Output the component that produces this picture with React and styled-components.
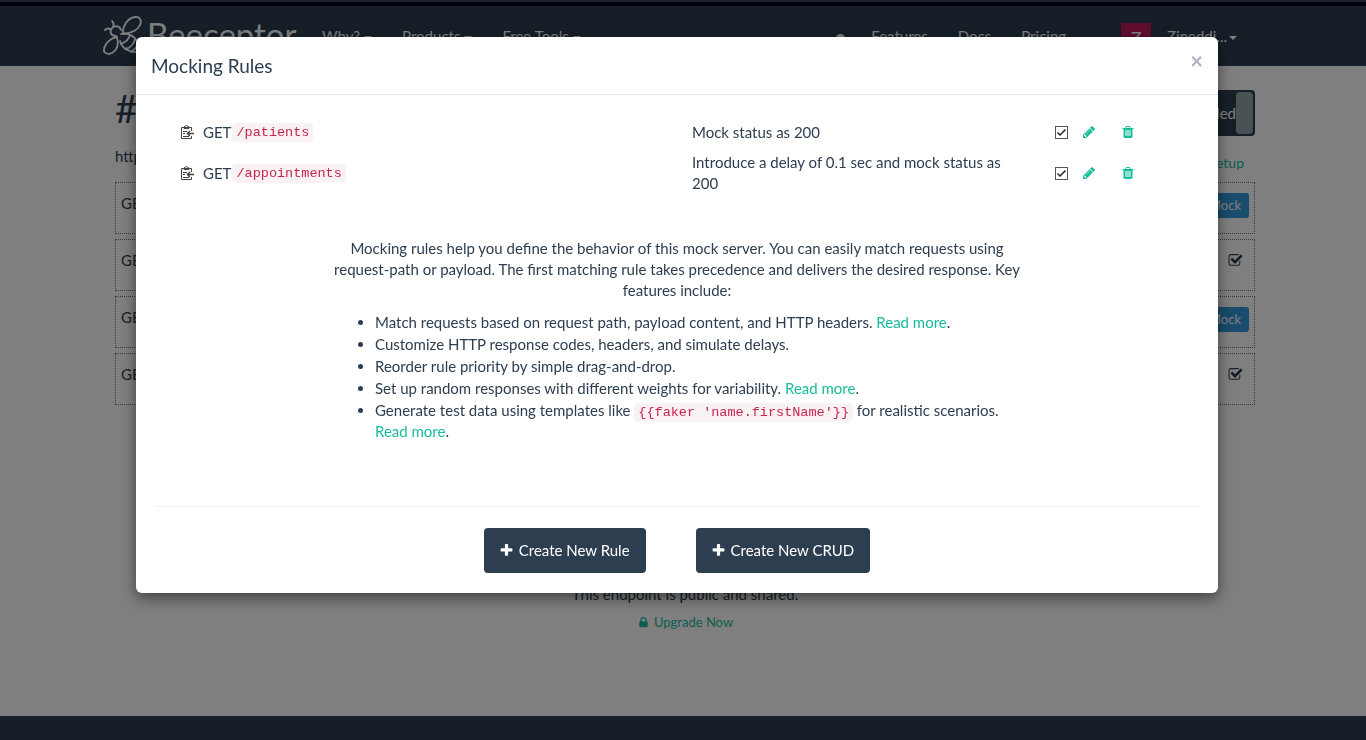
import React from 'react';
import styled, { createGlobalStyle } from 'styled-components';

const navy = '#2c3e50';
const green = '#18bc9c';

const GlobalStyle = createGlobalStyle`
  *, *::before, *::after { box-sizing: border-box; }
  body {
    margin: 0;
    font-family: Lato, "Liberation Sans", sans-serif;
    font-size: 15px;
    line-height: 21px;
    color: ${navy};
    background: #fff;
    overflow: hidden;
  }
  button, input { font: inherit; }
  p, h1, h2, ul { margin: 0; font-weight: 400; }
`;

const iconPaths = {
  pencil: 'M491 1536l91-91-235-235-91 91v107h128v128h107zm523-928q0-22-22-22-10 0-17 7l-542 542q-7 7-7 17 0 22 22 22 10 0 17-7l542-542q7-7 7-17zm-54-192l416 416-832 832h-416v-416zm683 96q0 53-37 90l-166 166-416-416 166-165q36-38 90-38 53 0 91 38l235 234q37 39 37 91z',
  trash: 'M704 1376v-704q0-14-9-23t-23-9h-64q-14 0-23 9t-9 23v704q0 14 9 23t23 9h64q14 0 23-9t9-23zm256 0v-704q0-14-9-23t-23-9h-64q-14 0-23 9t-9 23v704q0 14 9 23t23 9h64q14 0 23-9t9-23zm256 0v-704q0-14-9-23t-23-9h-64q-14 0-23 9t-9 23v704q0 14 9 23t23 9h64q14 0 23-9t9-23zm-544-992h448l-48-117q-7-9-17-11h-317q-10 2-17 11zm928 32v64q0 14-9 23t-23 9h-96v948q0 83-47 143.500t-113 60.500h-832q-66 0-113-58.500t-47-141.500v-952h-96q-14 0-23-9t-9-23v-64q0-14 9-23t23-9h309l70-167q15-37 54-63t79-26h320q40 0 79 26t54 63l70 167h309q14 0 23 9t9 23z',
  lock: 'M640 768h512v-192q0-106-75-181t-181-75-181 75-75 181v192zm832 96v576q0 40-28 68t-68 28h-960q-40 0-68-28t-28-68v-576q0-40 28-68t68-28h32v-192q0-184 132-316t316-132 316 132 132 316v192h32q40 0 68 28t28 68z',
  plus: 'M1600 736v192q0 40-28 68t-68 28h-416v416q0 40-28 68t-68 28h-192q-40 0-68-28t-28-68v-416h-416q-40 0-68-28t-28-68v-192q0-40 28-68t68-28h416v-416q0-40 28-68t68-28h192q40 0 68 28t28 68v416h416q40 0 68 28t28 68z',
  checkSquare: 'M1472 930v318q0 119-84.500 203.500t-203.500 84.500h-832q-119 0-203.500-84.500t-84.500-203.500v-832q0-119 84.500-203.500t203.500-84.500h832q63 0 117 25 15 7 18 23 3 17-9 29l-49 49q-10 10-23 10-3 0-9-2-23-6-45-6h-832q-66 0-113 47t-47 113v832q0 66 47 113t113 47h832q66 0 113-47t47-113v-254q0-13 9-22l64-64q10-10 23-10 6 0 12 3 20 8 20 29zm231-489l-814 814q-24 24-57 24t-57-24l-430-430q-24-24-24-57t24-57l110-110q24-24 57-24t57 24l263 263 647-647q24-24 57-24t57 24l110 110q24 24 24 57t-24 57z',
};

const IconSvg = styled.svg`
  width: ${(p) => p.$size || 15}px;
  height: ${(p) => p.$size || 15}px;
  fill: currentColor;
  flex: none;
`;

const Icon = ({ name, size }) => (
  <IconSvg viewBox="0 0 1792 1792" $size={size} aria-hidden="true">
    <path d={iconPaths[name]} />
  </IconSvg>
);

/* ---------- page behind the dialog ---------- */

const Page = styled.div`
  min-height: 100vh;
  display: flex;
  flex-direction: column;
`;

const TopStrip = styled.div`
  height: 6px;
  background: #020424;
  border-top: 2px solid #3c4262;
`;

const Container = styled.div`
  width: calc(100% - 30px);
  max-width: 1140px;
  margin: 0 auto;
`;

const Header = styled.header`
  background: ${navy};
  padding-left: 4px;
`;

const Nav = styled.nav`
  display: flex;
  align-items: center;
  height: 60px;
  margin-left: -13px;
  color: #fff;
`;

const Brand = styled.a`
  display: flex;
  align-items: center;
  gap: 5px;
  width: 220px;
  color: #fff;
  text-decoration: none;
  font-size: 33px;
  line-height: 40px;
`;

const BrandName = styled.span`
  padding-bottom: 4px;
`;

const BeeSvg = styled.svg`
  width: 40px;
  height: 42px;
  flex: none;
`;

const NavLink = styled.a`
  display: flex;
  align-items: center;
  gap: ${(p) => (p.$tight ? 2 : 4)}px;
  margin-right: ${(p) => p.$after || 30}px;
  color: #fff;
  text-decoration: none;
  white-space: nowrap;
`;

const Caret = styled.span`
  margin-top: 3px;
  border-top: 4px solid currentColor;
  border-left: 4px solid transparent;
  border-right: 4px solid transparent;
`;

const Spacer = styled.span`
  flex: 1;
`;

const Dot = styled.span`
  width: 9px;
  height: 9px;
  margin: 4px 26px 0 0;
  border-radius: 50%;
  background: #fff;
`;

const Avatar = styled.span`
  width: 30px;
  height: 30px;
  margin: 4px 16px 0 0;
  background: #c2185b;
  text-align: center;
  font-size: 18px;
  line-height: 30px;
`;

const Main = styled.main`
  flex: 1;
  padding: 24px 0 0 4px;
`;

const TitleRow = styled.div`
  display: flex;
  justify-content: space-between;
  height: 46px;
  margin-bottom: 10px;
`;

const PageTitle = styled.h1`
  font-size: 39px;
  line-height: 36px;
`;

const Toggle = styled.button`
  display: flex;
  align-items: center;
  justify-content: flex-end;
  width: 130px;
  padding: 0;
  border: 2px solid ${navy};
  border-radius: 4px;
  background: ${navy};
  color: #fff;
`;

const Knob = styled.span`
  width: 17px;
  height: 42px;
  border-radius: 4px;
  background: #95a5a6;
`;

const InfoRow = styled.div`
  display: flex;
  justify-content: space-between;
  height: 36px;
`;

const TextLink = styled.a`
  color: ${green};
  text-decoration: none;
`;

const SetupLink = styled(TextLink)`
  font-size: 14px;
  margin: 6px 11px 0 0;
`;

const Requests = styled.ul`
  display: flex;
  flex-direction: column;
  gap: 5px;
  padding: 0;
  list-style: none;
`;

const Request = styled.li`
  display: flex;
  align-items: flex-start;
  justify-content: space-between;
  height: 52px;
  padding: 10px 5px;
  border: 1px dotted #777;
`;

const Mock = styled.button`
  height: 25px;
  padding: 0 8px;
  border: 0;
  border-radius: 3px;
  background: #3498db;
  color: #fff;
  font-size: 13px;
`;

const Matched = styled.span`
  margin: 2px 6px 0 0;
`;

const Notice = styled.div`
  margin-top: 179px;
  text-align: center;
`;

const Upgrade = styled(TextLink)`
  display: flex;
  align-items: center;
  justify-content: center;
  gap: 4px;
  margin-top: 7px;
  font-size: 13px;
`;

const Footer = styled.footer`
  height: 24px;
  background: ${navy};
`;

/* ---------- dialog ---------- */

const Overlay = styled.div`
  position: fixed;
  inset: 0;
  padding: 37px 12px 0 0;
  background: rgba(0, 0, 0, 0.5);
`;

const Dialog = styled.section`
  margin: 0 136px;
  border-radius: 6px;
  background: #fff;
  box-shadow: 0 5px 15px rgba(0, 0, 0, 0.5);
`;

const DialogHeader = styled.header`
  display: flex;
  justify-content: space-between;
  align-items: flex-start;
  height: 58px;
  padding: 13px 15px 0;
  border-bottom: 1px solid #e5e5e5;
`;

const DialogTitle = styled.h2`
  font-size: 19px;
  line-height: 32px;
`;

const Close = styled.button`
  padding: 0;
  border: 0;
  background: none;
  color: #abb2b9;
  font-size: 22px;
  font-weight: 700;
  line-height: 22px;
`;

const Rules = styled.div`
  display: grid;
  padding: 17px 40px 0;
`;

const Rule = styled.div`
  display: grid;
  grid-template-columns: 516px 320px 1fr;
  align-items: center;
  min-height: 40px;
`;

const Match = styled.div`
  display: flex;
  align-items: center;
  gap: 1px;
`;

const ClipSvg = styled.svg`
  width: 14px;
  height: 14px;
  margin: 0 8px 0 4px;
`;

const Code = styled.code`
  padding: 2px 4px;
  border-radius: 4px;
  background: #f9f2f4;
  color: #c7254e;
  font-family: "Liberation Mono", monospace;
  font-size: 90%;
  line-height: 15px;
`;

const Actions = styled.div`
  display: flex;
  align-items: center;
  padding-left: 43px;
`;

const CheckWrap = styled.label`
  display: grid;
  margin-right: 14px;
  & > * { grid-area: 1 / 1; }
`;

const Check = styled.input`
  width: 13px;
  height: 13px;
  margin: 0;
  appearance: none;
  border: 1px solid #555;
  background: #fff;
`;

const TickSvg = styled.svg`
  width: 13px;
  height: 13px;
  pointer-events: none;
`;

const IconButton = styled.button`
  display: flex;
  padding: 0;
  border: 0;
  background: none;
  color: ${green};
  margin-right: 25px;
`;

const Help = styled.div`
  width: 690px;
  margin: 44px auto 0;
`;

const HelpText = styled.p`
  text-align: center;
  margin-bottom: 11px;
`;

const Features = styled.ul`
  display: grid;
  gap: 1px;
  padding-left: 43px;
`;

const Divider = styled.hr`
  margin: 64px 20px 21px;
  border: 0;
  border-top: 1px solid #ecf0f1;
`;

const DialogFooter = styled.footer`
  display: flex;
  justify-content: center;
  gap: 50px;
  padding-bottom: 20px;
`;

const Primary = styled.button`
  display: flex;
  align-items: center;
  gap: 5px;
  height: 45px;
  padding: 0 16px 0 15px;
  border: 0;
  border-radius: 4px;
  background: ${navy};
  color: #fff;
`;

const Bee = () => (
  <BeeSvg viewBox="0 0 40 42" fill="none" stroke="#fff" strokeWidth="1.8" strokeLinecap="round" strokeLinejoin="round" aria-hidden="true">
    <path d="M21 19C20 11 26 3 33 2c5-1 7 4 5 8-2 5-9 8-17 9" />
    <path d="M15 22C9 23 3 28 2 34c-1 4 4 6 8 4 5-3 7-9 5-16" />
    <path d="M19 15c-1-4-6-5-9-2-3 4-1 8 4 8M11 12C12 10 12 8 10 6M9 15C7 13 5 13 3 15" />
    <path d="M19 19C25 17 33 21 36 28L37 37C29 38 20 34 18 26" />
    <path d="M28 20c-1 4-4 7-9 9M33 24c-1 5-5 9-10 10M36 30c-2 3-4 5-7 7" />
  </BeeSvg>
);

const Clipboard = () => (
  <ClipSvg viewBox="0 0 14 14" fill="none" stroke="#444" aria-hidden="true">
    <path d="M11.500 6V2.500H1.500V13.500H11.500V11" />
    <path d="M4 3.500V2L6.500 .5L9 2V3.500Z" />
    <path d="M3 6.500H7M3 8.500H5M3 11.500H9" />
    <path d="M14 8.500H7.500M10 6L7.500 8.500L10 11" strokeWidth="1.500" />
  </ClipSvg>
);

const rules = [
  { path: '/patients', text: 'Mock status as 200' },
  { path: '/appointments', text: 'Introduce a delay of 0.1 sec and mock status as 200' },
];

export default function App() {
  return (
    <>
      <GlobalStyle />
      <Page>
        <TopStrip />
        <Header>
          <Container>
            <Nav>
              <Brand href="#"><Bee /><BrandName>Beeceptor</BrandName></Brand>
              <NavLink href="#">Why? <Caret /></NavLink>
              <NavLink href="#">Products <Caret /></NavLink>
              <NavLink href="#">Free Tools <Caret /></NavLink>
              <Spacer />
              <Dot />
              <NavLink href="#">Features</NavLink>
              <NavLink href="#">Docs</NavLink>
              <NavLink href="#" $after={55}>Pricing</NavLink>
              <Avatar>Z</Avatar>
              <NavLink href="#" $after={18} $tight>Zineddi... <Caret /></NavLink>
            </Nav>
          </Container>
        </Header>
        <Main>
          <Container>
            <TitleRow>
              <PageTitle>#</PageTitle>
              <Toggle>Enabled<Knob /></Toggle>
            </TitleRow>
            <InfoRow>
              <span>https://</span>
              <SetupLink href="#">Setup</SetupLink>
            </InfoRow>
            <Requests>
              {[true, false, true, false].map((mock, i) => (
                <Request key={i}>
                  <span>GET</span>
                  {mock ? <Mock>Mock</Mock> : <Matched><Icon name="checkSquare" /></Matched>}
                </Request>
              ))}
            </Requests>
            <Notice>
              <p>This endpoint is public and shared.</p>
              <Upgrade href="#"><Icon name="lock" size={13} />Upgrade Now</Upgrade>
            </Notice>
          </Container>
        </Main>
        <Footer />
      </Page>

      <Overlay>
        <Dialog role="dialog" aria-labelledby="rules-title">
          <DialogHeader>
            <DialogTitle id="rules-title">Mocking Rules</DialogTitle>
            <Close aria-label="Close">×</Close>
          </DialogHeader>
          <Rules>
            {rules.map((rule) => (
              <Rule key={rule.path}>
                <Match><Clipboard />GET<Code>{rule.path}</Code></Match>
                <span>{rule.text}</span>
                <Actions>
                  <CheckWrap>
                    <Check type="checkbox" defaultChecked aria-label={`Enable ${rule.path}`} />
                    <TickSvg viewBox="0 0 13 13" fill="none" stroke="#222" strokeWidth="1.500">
                      <path d="M2.500 6.500L5 9L10.500 3.500" />
                    </TickSvg>
                  </CheckWrap>
                  <IconButton aria-label="Edit"><Icon name="pencil" size={14} /></IconButton>
                  <IconButton aria-label="Delete"><Icon name="trash" size={14} /></IconButton>
                </Actions>
              </Rule>
            ))}
          </Rules>
          <Help>
            <HelpText>
              Mocking rules help you define the behavior of this mock server. You can easily match requests using
              request-path or payload. The first matching rule takes precedence and delivers the desired response.
              Key features include:
            </HelpText>
            <Features>
              <li>Match requests based on request path, payload content, and HTTP headers. <TextLink href="#">Read more</TextLink>.</li>
              <li>Customize HTTP response codes, headers, and simulate delays.</li>
              <li>Reorder rule priority by simple drag-and-drop.</li>
              <li>Set up random responses with different weights for variability. <TextLink href="#">Read more</TextLink>.</li>
              <li>
                Generate test data using templates like <Code>{"{{faker 'name.firstName'}}"}</Code> for realistic
                scenarios. <TextLink href="#">Read more</TextLink>.
              </li>
            </Features>
          </Help>
          <Divider />
          <DialogFooter>
            <Primary><Icon name="plus" />Create New Rule</Primary>
            <Primary><Icon name="plus" />Create New CRUD</Primary>
          </DialogFooter>
        </Dialog>
      </Overlay>
    </>
  );
}
